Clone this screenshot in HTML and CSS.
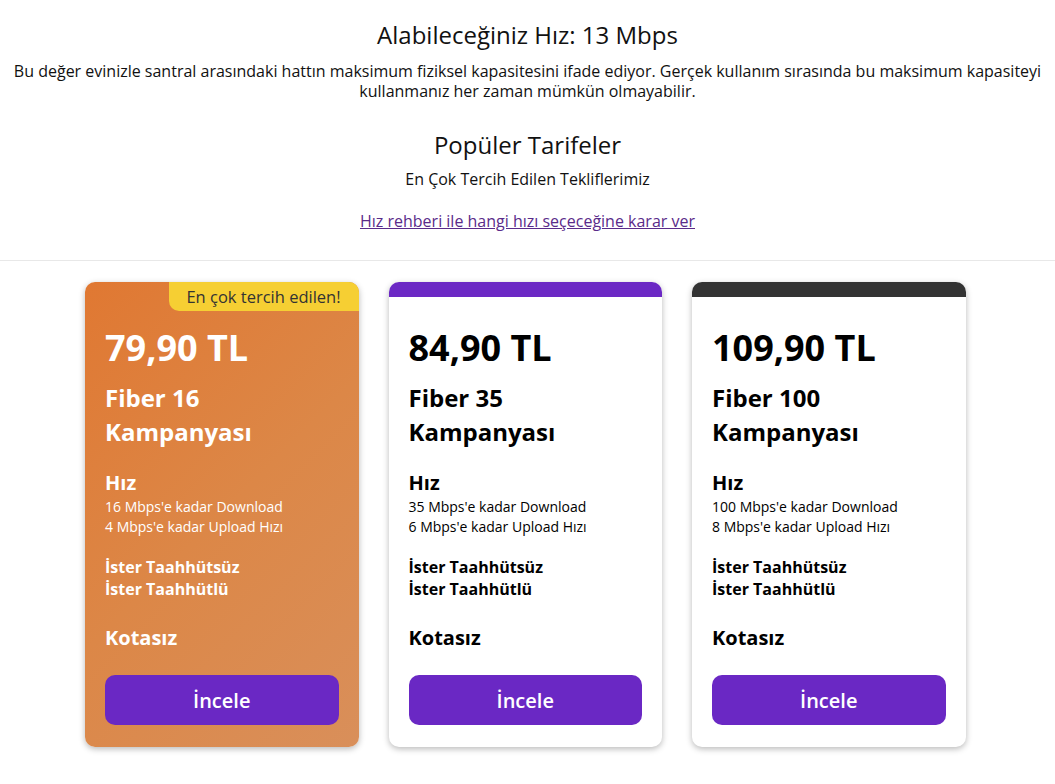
FILE: index.html
```html
<!DOCTYPE html>
<html lang="tr">
<head>
<meta charset="utf-8">
<title>Popüler Tarifeler</title>
<link rel="stylesheet" href="styles.css">
</head>
<body>
<header class="intro">
  <h1 class="speed-title">Alabileceğiniz Hız: 13 Mbps</h1>
  <p class="speed-note">Bu değer evinizle santral arasındaki hattın maksimum fiziksel kapasitesini ifade ediyor. Gerçek kullanım sırasında bu maksimum kapasiteyi kullanmanız her zaman mümkün olmayabilir.</p>
  <h2 class="section-title">Popüler Tarifeler</h2>
  <p class="section-sub">En Çok Tercih Edilen Tekliflerimiz</p>
  <a class="guide-link" href="#">Hız rehberi ile hangi hızı seçeceğine karar ver</a>
</header>
<main class="plans">
  <article class="card card-featured">
    <div class="card-bar"></div>
    <span class="badge">En çok tercih edilen!</span>
    <div class="card-body">
      <div class="price">79,90 TL</div>
      <div class="plan-name">Fiber 16<br>Kampanyası</div>
      <div class="feature-title">Hız</div>
      <div class="feature-lines">16 Mbps'e kadar Download<br>4 Mbps'e kadar Upload Hızı</div>
      <div class="commit">İster Taahhütsüz<br>İster Taahhütlü</div>
      <div class="quota">Kotasız</div>
      <a class="btn" href="#">İncele</a>
    </div>
  </article>
  <article class="card">
    <div class="card-bar bar-purple"></div>
    <div class="card-body">
      <div class="price">84,90 TL</div>
      <div class="plan-name">Fiber 35<br>Kampanyası</div>
      <div class="feature-title">Hız</div>
      <div class="feature-lines">35 Mbps'e kadar Download<br>6 Mbps'e kadar Upload Hızı</div>
      <div class="commit">İster Taahhütsüz<br>İster Taahhütlü</div>
      <div class="quota">Kotasız</div>
      <a class="btn" href="#">İncele</a>
    </div>
  </article>
  <article class="card">
    <div class="card-bar bar-dark"></div>
    <div class="card-body">
      <div class="price">109,90 TL</div>
      <div class="plan-name">Fiber 100<br>Kampanyası</div>
      <div class="feature-title">Hız</div>
      <div class="feature-lines">100 Mbps'e kadar Download<br>8 Mbps'e kadar Upload Hızı</div>
      <div class="commit">İster Taahhütsüz<br>İster Taahhütlü</div>
      <div class="quota">Kotasız</div>
      <a class="btn" href="#">İncele</a>
    </div>
  </article>
</main>
</body>
</html>
```
FILE: styles.css
```css
* { box-sizing: border-box; }
body {
  margin: 0;
  font-family: "Open Sans", "Noto Sans", sans-serif;
  color: #111;
  background: #fff;
}
.intro {
  display: flex;
  flex-direction: column;
  align-items: center;
  text-align: center;
  padding: 18px 8px 28px;
  border-bottom: 1px solid #e8e8e8;
}
.speed-title {
  margin: 0;
  font-size: 24px;
  font-weight: 400;
  line-height: 33px;
}
.speed-note {
  margin: 10px 0 0;
  font-size: 16px;
  line-height: 20px;
}
.section-title {
  margin: 27px 0 0;
  font-size: 24px;
  font-weight: 400;
  line-height: 33px;
}
.section-sub {
  margin: 8px 0 0;
  font-size: 16px;
  line-height: 20px;
}
.guide-link {
  margin-top: 21px;
  font-size: 16px;
  line-height: 22px;
  color: #5a2b8a;
  text-decoration: underline;
}
.plans {
  display: flex;
  gap: 30px;
  padding: 21px 0 30px 85px;
}
.card {
  position: relative;
  width: 273.5px;
  border-radius: 10px;
  background: #fff;
  box-shadow: 0 2px 6px rgba(0,0,0,0.28);
  overflow: hidden;
  color: #000;
}
.card-featured {
  background: linear-gradient(135deg, #e07832 0%, #dc8747 50%, #d98f5a 100%);
  color: #fff;
}
.card-bar { height: 15px; }
.bar-purple { background: #6b28c4; }
.bar-dark { background: #333; }
.badge {
  position: absolute;
  top: 0;
  right: 0;
  width: 190px;
  height: 29px;
  background: #f6cf33;
  color: #333;
  font-size: 16.5px;
  line-height: 29px;
  text-align: center;
  border-bottom-left-radius: 10px;
}
.card-body {
  display: flex;
  flex-direction: column;
  padding: 29px 20px 22px;
}
.price {
  font-size: 36px;
  font-weight: 700;
  line-height: 43px;
}
.plan-name {
  margin-top: 12px;
  font-size: 24px;
  font-weight: 700;
  line-height: 34px;
}
.feature-title {
  margin-top: 22px;
  font-size: 20px;
  font-weight: 700;
  line-height: 24px;
}
.feature-lines {
  margin-top: 2px;
  font-size: 14px;
  line-height: 20px;
}
.commit {
  margin-top: 19px;
  font-size: 16px;
  font-weight: 700;
  line-height: 22px;
}
.quota {
  margin-top: 24px;
  font-size: 20px;
  font-weight: 700;
  line-height: 27px;
}
.btn {
  margin-top: 24px;
  height: 50px;
  display: flex;
  align-items: center;
  justify-content: center;
  background: #6a28c4;
  color: #fff;
  border-radius: 10px;
  font-size: 20px;
  font-weight: 600;
  text-decoration: none;
}
```
